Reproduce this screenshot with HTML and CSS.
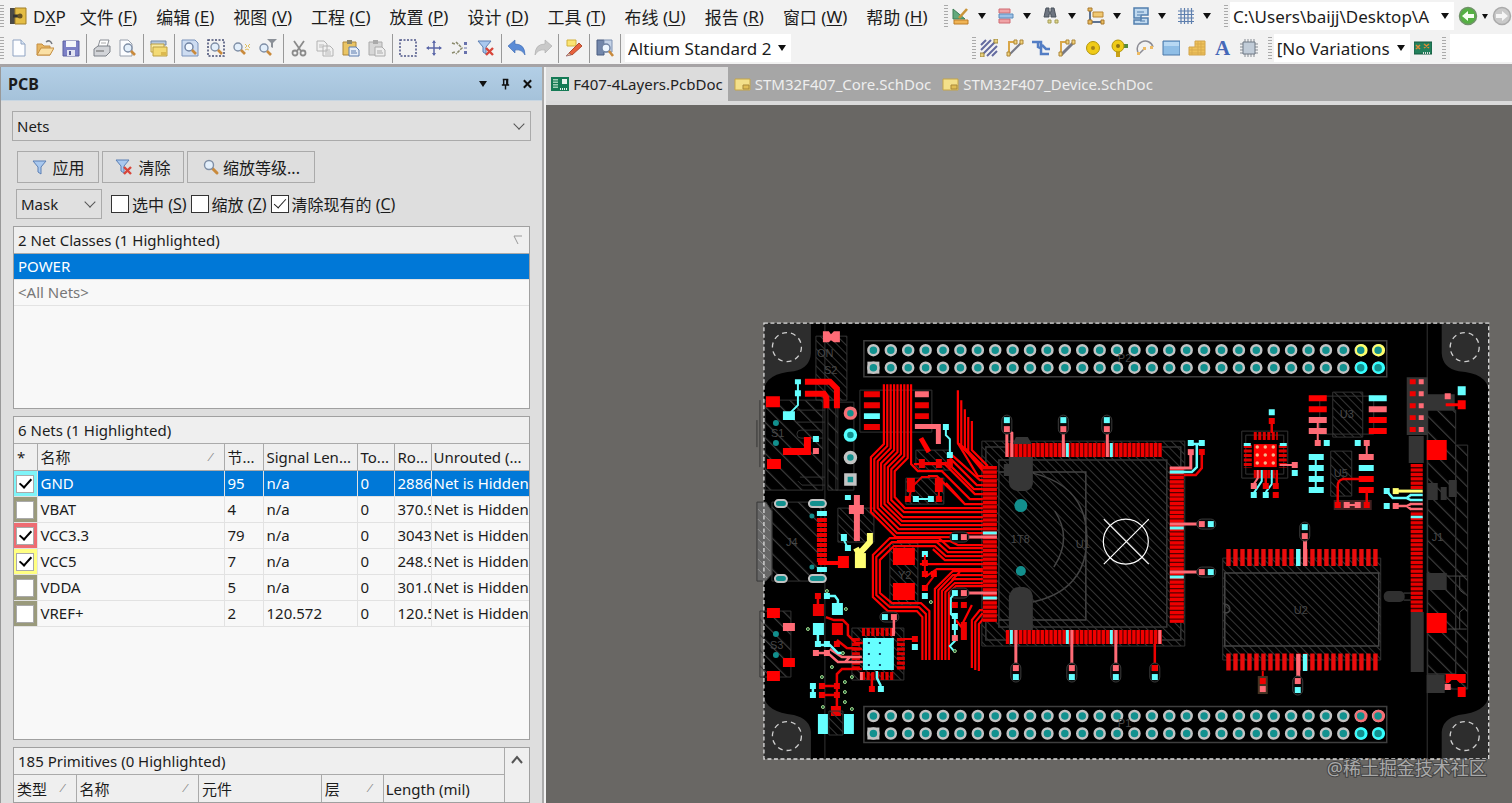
FILE: index.html
```html
<!DOCTYPE html>
<html lang="zh-CN">
<head>
<meta charset="utf-8">
<title>F407-4Layers.PcbDoc</title>
<link rel="stylesheet" href="styles.css">
</head>
<body>
<svg class="defs" aria-hidden="true">
  <defs>
    <symbol id="i-lens" viewBox="0 0 18 18"><path d="M10 10l5 5" stroke="#c98a3c" stroke-width="3" stroke-linecap="round"/><circle cx="7" cy="7" r="4.5" fill="#e3effb" stroke="#7f8fa6" stroke-width="1.4"/></symbol>
    <symbol id="i-funnel" viewBox="0 0 18 18"><path d="M2 3h13l-5 6v7l-3-2V9z" fill="#a9c8ee" stroke="#5b7fb4"/></symbol>
    <symbol id="i-funnelx" viewBox="0 0 18 18"><path d="M1 2h13l-5 6v7l-3-2V8z" fill="#a9c8ee" stroke="#5b7fb4"/><path d="M9 9l7 7M16 9l-7 7" stroke="#d8453a" stroke-width="2.4"/></symbol>
    <symbol id="i-sheet" viewBox="0 0 18 18"><path d="M2 4h15v11H2z" fill="#f3e08a" stroke="#c5a548"/><path d="M10 10h6v4h-6z" fill="#e0bd54" stroke="#a8893a"/></symbol>
  </defs>
</svg>
<header class="bars">
  <div class="bar">
    <nav class="menu" aria-label="Menu">
      <span class="grip"></span>
      <button class="menu-item dxp"><svg class="logo" viewBox="0 0 18 18"><path d="M1 1h6v16H1z" fill="#4b4a47"/><path d="M6 1h11v16H6z" fill="#e4bd45" stroke="#a17f28"/><path d="M4 9h5" stroke="#333" stroke-width="3"/><circle cx="11" cy="9" r="2.5" fill="#685322"/></svg>D<u>X</u>P</button>
      <button class="menu-item">文件 (<u>F</u>)</button>
      <button class="menu-item">编辑 (<u>E</u>)</button>
      <button class="menu-item">视图 (<u>V</u>)</button>
      <button class="menu-item">工程 (<u>C</u>)</button>
      <button class="menu-item">放置 (<u>P</u>)</button>
      <button class="menu-item">设计 (<u>D</u>)</button>
      <button class="menu-item">工具 (<u>T</u>)</button>
      <button class="menu-item">布线 (<u>U</u>)</button>
      <button class="menu-item">报告 (<u>R</u>)</button>
      <button class="menu-item">窗口 (<u>W</u>)</button>
      <button class="menu-item">帮助 (<u>H</u>)</button>
    </nav>
    <div class="utilities">
      <span class="grip"></span>
      <button class="tool drop" aria-label="Utility tools"><svg viewBox="0 0 18 18"><path d="M1 2v10h12z" fill="#62a97d" stroke="#3c7e55"/><path d="M7 11l8-9" stroke="#c99438" stroke-width="2.6"/><path d="M2 13h14v4H2z" fill="#f0b455" stroke="#bd7d27"/></svg><i class="caret"></i></button>
      <button class="tool drop" aria-label="Align"><svg viewBox="0 0 18 18"><path d="M2 2h11v4H2zM2 12h11v4H2z" fill="#f0a3a6" stroke="#cf6b72"/><path d="M2 7h14v4H2z" fill="#9cc0e6" stroke="#5d8cbb"/></svg><i class="caret"></i></button>
      <button class="tool drop" aria-label="Find"><svg viewBox="0 0 18 18"><path d="M4 1h3v4h2V1h3l2 9H9V7H7v3H2z" fill="#6d7480" stroke="#4b525c"/><path d="M6 13h3v3H6zM13 13h3v3h-3z" fill="#dfd68f" stroke="#a59d55"/></svg><i class="caret"></i></button>
      <button class="tool drop" aria-label="Dimension"><svg viewBox="0 0 18 18"><path d="M3 2v13h13" fill="none" stroke="#5d7392" stroke-width="2"/><path d="M6 5h10v5H6z" fill="#f0c872" stroke="#ba8632"/><path d="M1 1h4v3H1zM1 13h4v4H1zM14 13h3v4h-3z" fill="#e8bb60" stroke="#a9792b"/></svg><i class="caret"></i></button>
      <button class="tool drop" aria-label="Room"><svg viewBox="0 0 18 18"><path d="M2 1h14v7H9v3H2zM2 13h7v-2h7v6H2z" fill="#c0d9ef" stroke="#527fae" stroke-width="1.5"/><path d="M5 5h7M5 8h3M8 14h5" stroke="#527fae"/></svg><i class="caret"></i></button>
      <button class="tool drop" aria-label="Grid"><svg viewBox="0 0 18 18"><path d="M1 4h16M1 7.500h16M1 11h16M1 14.500h16M4 1v16M7.500 1v16M11 1v16M14.500 1v16" stroke="#5e7fae" stroke-width="1.2"/></svg><i class="caret"></i></button>
      <span class="grip"></span>
      <span class="field path-field"><input aria-label="Path" value="C:\Users\baijj\Desktop\A"><i class="caret"></i></span>
      <button class="nav-button" aria-label="Back"><svg viewBox="0 0 20 20"><circle cx="10" cy="10" r="8.500" fill="#55b043" stroke="#71926a" stroke-width="1.5"/><path d="M4 10l6-5v3h6v4h-6v3z" fill="#f7fff2"/></svg></button>
      <i class="caret small"></i>
      <button class="nav-button" aria-label="Forward"><svg viewBox="0 0 20 20"><circle cx="10" cy="10" r="8.500" fill="#c9c9c9" stroke="#aaa" stroke-width="1.5"/><path d="M16 10l-6-5v3H4v4h6v3z" fill="#f5f5f5"/></svg></button>
    </div>
  </div>
  <div class="bar">
    <div class="standard">
      <span class="grip"></span>
      <button class="tool" aria-label="New"><svg viewBox="0 0 18 18"><path d="M3 1h8l4 4v12H3z" fill="#fcfdff" stroke="#8fa3c2"/><path d="M11 1v4h4" fill="#dbe7f5" stroke="#8fa3c2"/></svg></button>
      <button class="tool" aria-label="Open"><svg viewBox="0 0 18 18"><path d="M1 16V5h5l2 2h6v9z" fill="#e7b662" stroke="#c58e42"/><path d="M1 16l4-7h13l-4 7z" fill="#fae0a5" stroke="#c58e42"/><path d="M10 3q4-3 6 2" fill="none" stroke="#75797f" stroke-width="1.5"/></svg></button>
      <button class="tool" aria-label="Save"><svg viewBox="0 0 18 18"><path d="M1 2h16v15H1z" fill="#7c80c6" stroke="#5b5f9f"/><path d="M4 2h10v6H4z" fill="#f4f5fa"/><path d="M5 11h8v6H5z" fill="#e1e3f2"/><path d="M7 12h2v4H7z" fill="#555b96"/></svg></button>
      <i class="separator"></i>
      <button class="tool" aria-label="Print"><svg viewBox="0 0 18 18"><path d="M5 8l2-7h9l-2 7z" fill="#fff" stroke="#8b8f96"/><path d="M1 10l4-3h12v6l-4 4H1z" fill="#d2d4d8" stroke="#7d8188"/><path d="M3 12h8" stroke="#666"/><path d="M8 4h5" stroke="#aaa"/></svg></button>
      <button class="tool" aria-label="Print preview"><svg viewBox="0 0 18 18"><path d="M1 1h8l4 4v12H1z" fill="#fcfdff" stroke="#98a0ad"/><circle cx="9" cy="9" r="4" fill="#e3effb" stroke="#7f8fa6" stroke-width="1.400"/><path d="M12 12l4 4" stroke="#c98a3c" stroke-width="2.600"/></svg></button>
      <i class="separator"></i>
      <button class="tool" aria-label="Workspace"><svg viewBox="0 0 18 18"><path d="M1 2h15v4H1z" fill="#b6c8df" stroke="#7389a8"/><path d="M1 5h13v8H1z" fill="#f7e9a2" stroke="#bc9f45"/><path d="M3 8h14v9H3z" fill="#f3da74" stroke="#bc9f45"/><path d="M11 13h5v3h-5z" fill="#dcb94f"/></svg></button>
      <i class="separator"></i>
      <button class="tool" aria-label="Fit document"><svg viewBox="0 0 18 18"><path d="M1 1h13l3 3v13H1z" fill="#cddcf1" stroke="#7a93bb"/><circle cx="8" cy="8" r="4" fill="#f2f8ff" stroke="#6f83a3" stroke-width="1.400"/><path d="M11 11l4 4" stroke="#c98a3c" stroke-width="2.600"/></svg></button>
      <button class="tool" aria-label="Zoom area"><svg viewBox="0 0 18 18"><path d="M1 1h16v16H1z" fill="none" stroke="#444c73" stroke-width="1.500" stroke-dasharray="2 1.500"/><circle cx="8" cy="8" r="4" fill="#e3effb" stroke="#7f8fa6" stroke-width="1.400"/><path d="M11 11l4 4" stroke="#c98a3c" stroke-width="2.600"/></svg></button>
      <button class="tool" aria-label="Zoom selected"><svg viewBox="0 0 18 18"><circle cx="5" cy="8" r="4" fill="#e3effb" stroke="#7f8fa6" stroke-width="1.400"/><path d="M8 11l4 4" stroke="#c98a3c" stroke-width="2.600"/><path d="M12 5l2 2-2 2M17 5l-2 2 2 2M12 11l2-1 2 1" fill="none" stroke="#e0c060"/></svg></button>
      <button class="tool" aria-label="Zoom filtered"><svg viewBox="0 0 18 18"><path d="M8 0h10l-4 4v5l-2-1V4z" fill="#8c9198"/><circle cx="5" cy="9" r="4" fill="#e3effb" stroke="#7f8fa6" stroke-width="1.400"/><path d="M8 12l4 4" stroke="#c98a3c" stroke-width="2.600"/></svg></button>
      <i class="separator"></i>
      <button class="tool" aria-label="Cut"><svg viewBox="0 0 18 18"><path d="M4 2l7 10M14 2L7 12" stroke="#8b8b8b" stroke-width="1.800"/><circle cx="5" cy="14" r="2.500" fill="none" stroke="#8b8b8b" stroke-width="1.800"/><circle cx="13" cy="14" r="2.500" fill="none" stroke="#8b8b8b" stroke-width="1.800"/></svg></button>
      <button class="tool" aria-label="Copy"><svg viewBox="0 0 18 18"><path d="M1 2h7l3 3v7H1zM7 7h7l3 3v7H7z" fill="#f1f1f1" stroke="#b2b2b2"/><path d="M3 6h5M3 8h4M9 11h5M9 13h6M9 15h6" stroke="#bbb"/></svg></button>
      <button class="tool" aria-label="Paste"><svg viewBox="0 0 18 18"><path d="M1 3h13v13H1z" fill="#eac565" stroke="#ad8638"/><path d="M5 1h5v4H5z" fill="#8c8870"/><path d="M7 8h7l3 3v6H7z" fill="#e5edf8" stroke="#5d7cae"/><path d="M9 12h5M9 14h6" stroke="#5d7cae"/></svg></button>
      <button class="tool" aria-label="Paste special"><svg viewBox="0 0 18 18"><path d="M1 3h13v13H1z" fill="#d7d7d7" stroke="#aaa"/><path d="M5 1h5v4H5z" fill="#aaa"/><path d="M7 8h7l3 3v6H7z" fill="#eee" stroke="#aaa"/><path d="M9 12h5M9 14h6" stroke="#aaa"/></svg></button>
      <i class="separator"></i>
      <button class="tool" aria-label="Select area"><svg viewBox="0 0 18 18"><path d="M1 1h16v16H1z" fill="none" stroke="#4e5688" stroke-width="1.500" stroke-dasharray="2 1.500"/></svg></button>
      <button class="tool" aria-label="Move"><svg viewBox="0 0 18 18"><path d="M9 2v14M2 9h14" stroke="#5b67a8" stroke-width="1.500"/><path d="M9 1l2 3H7zM9 17l2-3H7zM1 9l3-2v4zM17 9l-3-2v4z" fill="#5b67a8"/></svg></button>
      <button class="tool" aria-label="Deselect"><svg viewBox="0 0 18 18"><path d="M1 4l3 1M5 3l6 6-6 6M1 14l3-1" fill="none" stroke="#8a8a6c" stroke-width="1.500" stroke-dasharray="3 1"/><path d="M13 3h3v3h-3zM13 12h3v3h-3z" fill="#6872ad"/><path d="M13 9h3" stroke="#6872ad"/></svg></button>
      <button class="tool" aria-label="Clear filter"><svg><use href="#i-funnelx"/></svg></button>
      <i class="separator"></i>
      <button class="tool" aria-label="Undo"><svg viewBox="0 0 18 18"><path d="M0 7l7-6v4q10 0 10 11-3-6-10-5v3z" fill="#5a8bd6" stroke="#3b68b0" stroke-width=".600"/></svg></button>
      <button class="tool" aria-label="Redo"><svg viewBox="0 0 18 18"><path d="M18 7l-7-6v4Q1 5 1 16q3-6 10-5v3z" fill="#c9c9c9" stroke="#aaa" stroke-width=".600"/></svg></button>
      <i class="separator"></i>
      <button class="tool" aria-label="Cross probe"><svg viewBox="0 0 18 18"><path d="M2 1h9v6H2z" fill="#fbe573" stroke="#d2b13c"/><path d="M4 14L14 4l3 3L7 16z" fill="#e8633e" stroke="#b14a2d"/><path d="M1 17l3-3 2 2z" fill="#e8c291" stroke="#a77"/></svg></button>
      <i class="separator"></i>
      <button class="tool" aria-label="Browse"><svg viewBox="0 0 18 18"><path d="M1 1h7v15H1z" fill="#7387ab" stroke="#4a5d80"/><path d="M8 1h8v12H8z" fill="#c5d3e8" stroke="#7d90b1"/><circle cx="10" cy="9" r="4" fill="#eef6ff" stroke="#6f83a3" stroke-width="1.400"/><path d="M13 12l4 5" stroke="#c98a3c" stroke-width="2.600"/></svg></button>
      <i class="separator"></i>
      <span class="field view-field"><select aria-label="View configuration"><option>Altium Standard 2</option></select><i class="caret"></i></span>
    </div>
    <div class="wiring">
      <span class="grip"></span>
      <button class="tool" aria-label="Route"><svg viewBox="0 0 18 18"><path d="M1 6l5-5M1 11L11 1M1 17L16 2M7 17l10-10M12 17l5-5" stroke="#646ba0" stroke-width="2"/><path d="M14 0h4v4h-4zM0 14h4v4H0z" fill="#e7cf7d" stroke="#9d873d"/></svg></button>
      <button class="tool" aria-label="Route pair"><svg viewBox="0 0 18 18"><path d="M3 16L16 3" stroke="#777a87" stroke-width="2"/><path d="M3 14V3h6" fill="none" stroke="#d9a749" stroke-width="2"/><path d="M14 1h3v4h-3zM1 13h3v4H1zM8 1h3v4H8z" fill="#f1d27b" stroke="#ad8638"/></svg></button>
      <button class="tool" aria-label="Route bus"><svg viewBox="0 0 18 18"><path d="M0 3h9v12h8M6 3v5l4 2M10 6l4 4h4" fill="none" stroke="#537dc4" stroke-width="2.500"/></svg></button>
      <button class="tool" aria-label="Route differential"><svg viewBox="0 0 18 18"><path d="M3 16L16 3" stroke="#777a87" stroke-width="3"/><path d="M3 15V3h8" fill="none" stroke="#d9a749" stroke-width="2"/><path d="M14 1h3v4h-3zM1 13h3v4H1zM8 1h3v4H8z" fill="#f1d27b" stroke="#ad8638"/></svg></button>
      <button class="tool" aria-label="Pad"><svg viewBox="0 0 18 18"><circle cx="9" cy="9" r="6.500" fill="#f0cb18" stroke="#b3960d"/><circle cx="9" cy="9" r="2" fill="#a68317"/></svg></button>
      <button class="tool" aria-label="Via"><svg viewBox="0 0 18 18"><path d="M11 7h7" stroke="#568d3e" stroke-width="4"/><path d="M8 11v7" stroke="#c8a11a" stroke-width="4"/><circle cx="8" cy="7" r="6" fill="#f0cb18" stroke="#b3960d"/><circle cx="8" cy="7" r="2" fill="#8f7314"/></svg></button>
      <button class="tool" aria-label="Arc"><svg viewBox="0 0 18 18"><path d="M3 15A8 8 0 1 1 17 8M3 15l5-5" fill="none" stroke="#8c8c94" stroke-width="1.500"/><path d="M1 13h3v3H1zM14 7h3v3h-3zM7 8h3v3H7z" fill="#edbb64"/></svg></button>
      <button class="tool" aria-label="Fill"><svg viewBox="0 0 18 18"><path d="M1 2h17v14H1z" fill="#8fbee6" stroke="#4c78a8"/><path d="M2 3h15v4H2z" fill="#b7d8f3"/></svg></button>
      <button class="tool" aria-label="Polygon"><svg viewBox="0 0 18 18"><path d="M1 8h6V2h10v14H1z" fill="#eec25c" stroke="#d1a34b"/><path d="M1 11h16M1 14h16M7 5h10M4 8v8M10 2v14M13 2v14M7 8h10" stroke="#d9ab4c"/></svg></button>
      <button class="tool letter" aria-label="String">A</button>
      <button class="tool" aria-label="Component"><svg viewBox="0 0 18 18"><path d="M5 0v18M8 0v18M11 0v18M14 0v18M0 5h18M0 8h18M0 11h18M0 14h18" stroke="#858b93"/><path d="M3 3h12v12H3z" fill="#c1ccd8" stroke="#6f7984"/></svg></button>
      <span class="grip late"></span>
      <span class="field variant-field"><select aria-label="Variations"><option>[No Variations</option></select><i class="caret"></i></span>
      <button class="tool" aria-label="Variant board"><svg viewBox="0 0 18 18"><path d="M0 3h18v12H0z" fill="#23805c" stroke="#17583f"/><path d="M2 6l4 4M6 6l-4 4M10 5l5 4M15 5l-5 4" stroke="#e08a35" stroke-width="1.500"/><path d="M9 14h8" stroke="#ddd" stroke-width="2" stroke-dasharray="1 1"/></svg></button>
      <span class="grip late"></span>
      <input class="blank-field" aria-label="Filter">
    </div>
  </div>
</header>
<main class="workspace">
  <aside class="panel">
    <div class="panel-title">
      <h1>PCB</h1>
      <button aria-label="Menu"><i class="caret"></i></button>
      <button aria-label="Pin"><svg viewBox="0 0 12 12"><path d="M3 1h6M4 1v6M7.500 1v6M2 7h8M6 7v5" stroke="#111" stroke-width="1.600"/><path d="M7 1h2v6H7z" fill="#111"/></svg></button>
      <button aria-label="Close"><svg viewBox="0 0 12 12"><path d="M2 2l8 8M10 2l-8 8" stroke="#111" stroke-width="2.200"/></svg></button>
    </div>
    <div class="panel-body">
      <span class="combo"><select aria-label="Object type"><option>Nets</option></select></span>
      <div class="actions">
        <button class="action"><svg><use href="#i-funnel"/></svg>应用</button>
        <button class="action wide"><svg><use href="#i-funnelx"/></svg>清除</button>
        <button class="action widest"><svg><use href="#i-lens"/></svg>缩放等级...</button>
      </div>
      <div class="options">
        <span class="combo mask"><select aria-label="Highlight mode"><option>Mask</option></select></span>
        <label><input type="checkbox">选中 (<u>S</u>)</label>
        <label><input type="checkbox">缩放 (<u>Z</u>)</label>
        <label><input type="checkbox" checked>清除现有的 (<u>C</u>)</label>
      </div>
      <section class="list classes">
        <h2>2 Net Classes (1 Highlighted)<svg class="sort" viewBox="0 0 10 10"><path d="M9 1H1l4 8" fill="none" stroke="#999"/></svg></h2>
        <ul><li class="selected">POWER</li><li class="muted">&lt;All Nets&gt;</li></ul>
      </section>
      <section class="list nets">
        <h2>6 Nets (1 Highlighted)</h2>
        <table>
          <colgroup><col class="c-mark"><col class="c-name"><col class="c-node"><col class="c-signal"><col class="c-small"><col class="c-small"><col></colgroup>
          <thead><tr><th>*</th><th>名称<i class="slash">⁄</i></th><th>节...</th><th>Signal Len...</th><th>To...</th><th>Ro...</th><th>Unrouted (...</th></tr></thead>
          <tbody>
            <tr class="selected"><td class="mark cyan"><input type="checkbox" aria-label="GND" checked></td><td>GND</td><td>95</td><td>n/a</td><td>0</td><td>2886</td><td>Net is Hidden</td></tr>
            <tr><td class="mark"><input type="checkbox" aria-label="VBAT"></td><td>VBAT</td><td>4</td><td>n/a</td><td>0</td><td>370.9</td><td>Net is Hidden</td></tr>
            <tr><td class="mark pink"><input type="checkbox" aria-label="VCC3.3" checked></td><td>VCC3.3</td><td>79</td><td>n/a</td><td>0</td><td>3043</td><td>Net is Hidden</td></tr>
            <tr><td class="mark yellow"><input type="checkbox" aria-label="VCC5" checked></td><td>VCC5</td><td>7</td><td>n/a</td><td>0</td><td>248.9</td><td>Net is Hidden</td></tr>
            <tr><td class="mark"><input type="checkbox" aria-label="VDDA"></td><td>VDDA</td><td>5</td><td>n/a</td><td>0</td><td>301.0</td><td>Net is Hidden</td></tr>
            <tr><td class="mark"><input type="checkbox" aria-label="VREF+"></td><td>VREF+</td><td>2</td><td>120.572</td><td>0</td><td>120.5</td><td>Net is Hidden</td></tr>
          </tbody>
        </table>
      </section>
      <section class="list primitives">
        <div class="primitives-main">
          <h2>185 Primitives (0 Highlighted)</h2>
          <table>
            <colgroup><col class="p-type"><col class="p-name"><col class="p-name"><col class="p-type"><col></colgroup>
            <thead><tr><th>类型<i class="slash">⁄</i></th><th>名称<i class="slash">⁄</i></th><th>元件</th><th>层<i class="slash">⁄</i></th><th>Length (mil)</th></tr></thead>
          </table>
        </div>
        <button class="scroll-up" aria-label="Scroll up"><svg viewBox="0 0 12 12"><path d="M1 9l5-6 5 6" fill="none" stroke="#555" stroke-width="2"/></svg></button>
      </section>
    </div>
  </aside>
  <section class="document">
    <div class="tabs" role="tablist">
      <button class="tab active" role="tab" aria-selected="true"><svg viewBox="0 0 18 18"><path d="M0 2h18v14H0z" fill="#157a55"/><path d="M2 4h5v9H2z" fill="#9fd0b7"/><path d="M2 6h5M2 8.500h5M2 11h5" stroke="#157a55"/><path d="M11 4h5v5h-5z" fill="#e8f1ec"/><path d="M9 14h8" stroke="#e8f1ec" stroke-width="2" stroke-dasharray="1 1"/></svg>F407-4Layers.PcbDoc</button>
      <button class="tab" role="tab"><svg><use href="#i-sheet"/></svg>STM32F407_Core.SchDoc</button>
      <button class="tab" role="tab"><svg><use href="#i-sheet"/></svg>STM32F407_Device.SchDoc</button>
    </div>
    <svg class="board" viewBox="546 105 966 698" preserveAspectRatio="xMaxYMax meet" role="img" aria-label="PCB layout">
      <defs>
        <pattern id="hatch" width="6" height="6" patternUnits="userSpaceOnUse" patternTransform="rotate(-45)"><path d="M0 0V6" stroke="#3c3c3c" stroke-width="1.800"/></pattern>
        <pattern id="wide" width="11" height="11" patternUnits="userSpaceOnUse" patternTransform="rotate(-45)"><path d="M0 0V11" stroke="#3f3f3f" stroke-width="2.400"/></pattern>
        <g id="capv"><rect x="-5" y="-5" width="10" height="19" rx="5" fill="#070707" stroke="#3c3c3c"/><path d="M-3-3h6v6h-6z" fill="#6ff"/><path d="M-3 6h6v6h-6z" fill="#ff6b76"/></g>
        <g id="capd"><rect x="-5" y="-5" width="10" height="19" rx="5" fill="#070707" stroke="#3c3c3c"/><path d="M-3-3h6v6h-6z" fill="#ff6b76"/><path d="M-3 6h6v6h-6z" fill="#6ff"/></g>
        <g id="caph"><rect x="-5" y="-5" width="19" height="10" rx="5" fill="#070707" stroke="#3c3c3c"/><path d="M-3-3h6v6h-6z" fill="#ff6b76"/><path d="M6-3h6v6H6z" fill="#6ff"/></g>
        <g id="capl"><rect x="-5" y="-5" width="19" height="10" rx="5" fill="#070707" stroke="#3c3c3c"/><path d="M-3-3h6v6h-6z" fill="#6ff"/><path d="M6-3h6v6H6z" fill="#ff6b76"/></g>
        <g id="header" fill="none"><path d="M0-9.500H523V26.500H0z" stroke="#3e3e3e" stroke-width="1.500"/><path d="M9.500 0H515M9.500 17.500H515" stroke="#c3c3c3" stroke-width="12.500" stroke-linecap="round" stroke-dasharray="0 17.410"/><path d="M3.500 11.500h12v12h-12z" fill="#c3c3c3"/></g>
        <path id="holes" d="M9.500 0H515M9.500 17.500H515" fill="none" stroke="#12918f" stroke-width="7.500" stroke-linecap="round" stroke-dasharray="0 17.410"/>
      </defs>
      <path d="M764 323h725v436H764z" fill="#000"/>
      <g fill="#2d2d2d"><path d="M764 323h47v30q-1 15-17 18-28 2-30 19zM1489 323h-47v30q1 15 17 18 28 2 30 19zM764 759h47v-27q-1-13-17-17-28-3-30-19zM1489 759h-47v-27q1-13 17-17 28-3 30-19z"/></g>
      <g fill="none" stroke="#d0d0d0" stroke-width="1.300" stroke-dasharray="5 4"><circle cx="787" cy="347" r="14.500"/><circle cx="1465" cy="347" r="14.500"/><circle cx="787" cy="736" r="14.500"/><circle cx="1465" cy="736" r="14.500"/></g>
      <path d="M825 323V759M1427.500 323V759" stroke="#333"/>

      <!-- pin headers -->
      <g transform="translate(864 350)"><use href="#header"/><path d="M497.500 0h.1M515 0h.1" stroke="#ffff6a" stroke-width="12.500" stroke-linecap="round"/><path d="M497.500 17.500h.1M515 17.500h.1" stroke="#3ff" stroke-width="12.500" stroke-linecap="round"/><use href="#holes"/></g>
      <g transform="translate(864 716)"><use href="#header"/><path d="M497.500 0h.1M515 0h.1" stroke="#f47076" stroke-width="12.500" stroke-linecap="round"/><path d="M497.500 17.500h.1M515 17.500h.1" stroke="#3ff" stroke-width="12.500" stroke-linecap="round"/><use href="#holes"/></g>

      <!-- hatched component bodies -->
      <g fill="url(#hatch)" stroke="#343434">
        <path d="M816 336h31v64h-31zM982 441h203v205H982zM890 543h28v62h-28zM1333 392h30v45h-30zM1331 451h21v45h-21zM1223 558h158v102h-158zM852 628h52v52h-52z"/>
        <path d="M860 390h72v42h-72zM1320 396h54v38h-54z" fill="none"/>
        <path d="M916 450h35v20h-35zM906 478h38v26h-38zM838 508h36v34h-36z"/>
        <path d="M1242 431h46v47h-46zM1246 435h38v39h-38z" fill="none"/>
      </g>
      <g fill="url(#wide)" stroke="#343434">
        <path d="M765 400h58v90h-58zM828 400h10v90h-10zM772 502h49v79h-49zM760 611h31v66h-31zM1428 410h28v264h-28zM1456 445h12v244h-40v-15h28z"/>
        <path d="M760 400v67M757 420v27M823 430h-22q-4 0-4 4t4 4h22M836 402h18v88h-18z" fill="none"/>
        <path d="M800 477h25M798 481l4 4h23M825 422h-28M825 410h-28" fill="none"/>
      </g>
      <path d="M986 447h195v193H986zM999 460h168v167H999z" fill="none" stroke="#363636" stroke-width="1.500"/>
      <path d="M1225 573h154v73h-154zM1225 604q5 1 5 5t-5 4" fill="none" stroke="#464646" stroke-width="1.500"/>
      <path d="M757 502h9l6 9v63l-6 7h-9z" fill="#666" stroke="#383838"/><path d="M758 509l12 12M758 519l12 12M758 529l12 12M758 539l12 12M758 549l12 12M758 559l12 12M758 569l9 9" stroke="#929292"/>

      <!-- left bus -->
      <g fill="none" stroke="#f00" stroke-width="2.200">
        <path d="M884 384V444L871 457V512L896 537H985"/>
        <path d="M887.400 384V446L874.400 459V510L897 533H985"/>
        <path d="M890.800 384V448L877.800 461V508L899 529H985"/>
        <path d="M894.200 384V450L881.200 463V506L901 525H985"/>
        <path d="M897.600 384V452L884.600 465V504L902 521H985"/>
        <path d="M901 384V454L888 467V502L903 517H985"/>
        <path d="M904.400 384V456L891.400 469V500L904 512H985"/>
        <path d="M907.800 384V458L894.800 471V497L905 508H985"/>
        <path d="M911.200 384V464L918 471H942L970 499H985"/>
        <path d="M914 464H945L975 494H985M928 476H937L965 504H985M948 463L974 489H990M950 458L977 485H990M946 483L964 503M950 453L980 480H990"/>
        <path d="M958 390V443L983 468H990M961.400 400V445M965 409V448L981 464M968.400 417V452M972 421V450L988 466M961.400 445L984 472H990M968.400 452L984 467"/>
        <path d="M958 443L978 476H990"/>
        <path d="M985 548H950L939 538H890L873 555V597L888 611H917L922.500 617V660"/>
        <path d="M985 552H948L937 542H892L876.400 557V595L890 607H919L926 614V660"/>
        <path d="M985 556H946L935 546H894L880 560V593L892 603H921L929.500 611V660"/>
        <path d="M985 560H945L933 549M985 564H920M985 569H937L925 577"/>
        <path d="M935 660V589L953 571H985M938.500 660V590L953 575H985M942 660V591L954 579H985M945.500 660V592L955 583H985M949 660V593L956 586H985"/>
        <path d="M972 668V620L980 610H985M975.400 670V622L982 614H985M979 671V624L984 618H985"/>
        <path d="M897 541H950L958 545H985M952 580L960 572M956 620L964 630V640M972 605L963 623"/>
      </g>

      <!-- U1 pins -->
      <g fill="none"><path d="M1006 450h156M1006 637h156" stroke="#500" stroke-width="14"/><path d="M990 466v156M1177 467v156" stroke="#500" stroke-width="14"/>
        <path d="M1006 450h156M1006 637h156M990 466v156M1177 467v156" stroke="#f00000" stroke-width="14" stroke-dasharray="3.200 1.160"/>
        <path d="M1067.500 443v14M1111.500 443v14M1011.500 630v14M1067.500 630v14M1111.500 630v14M983 533h14M983 598h14M1170 472h14M1170 528h14M1170 577h14" stroke="#6ff" stroke-width="3"/>
        <path d="M1007 430v27M1008 430l4 3v24M1063.500 430v27M1107.500 430v27M1016 630v34M1072 630v34M1116 630v34M1160 630v14M997 537h-30M997 593h-30M1170 524h30M1170 572h30M1170 468h21v-14" stroke="#ff6b76" stroke-width="3"/>
        <path d="M1170 472h22l5-5v-23h-6h11" stroke="#6ff" stroke-width="2.500"/><path d="M1184 475h12l6-7v-16M1155 644v22" stroke="#e00" stroke-width="2.500"/></g>
      <g fill="none" stroke="#444" stroke-width="1.500"><path d="M999 472h87v148h-87M1033 473q54 13 54 65t-54 64M1055 511q18 27-1 56"/></g>
      <path d="M1013 444l3-7h12l4 7zM1009 457h24v27q-2 7-8 7h-8q-7-1-8-8zM1004 464h8v12h-8zM1009 630v-34q3-9 10-9h5q8 1 9 9v34z" fill="#363636"/>
      <g fill="#128f8d"><circle cx="1021" cy="505.500" r="6.500"/><circle cx="1021" cy="571" r="5"/><circle cx="776" cy="423" r="3"/><circle cx="776" cy="443" r="3"/><circle cx="812" cy="516" r="2.500"/><circle cx="812" cy="567" r="2.500"/><circle cx="776" cy="634" r="3"/><circle cx="776" cy="655" r="3"/></g>
      <use href="#capv" x="1007" y="420"/><use href="#capv" x="1063.500" y="420"/><use href="#capv" x="1107" y="420"/>
      <use href="#capd" x="1016" y="668"/><use href="#capd" x="1072" y="668"/><use href="#capd" x="1116" y="668"/><use href="#capd" x="1155" y="668"/>
      <use href="#caph" x="1202" y="524"/><use href="#caph" x="1202" y="572"/><use href="#capl" x="955" y="537"/><use href="#capl" x="955" y="593"/><use href="#capl" x="885" y="617"/>
      <path d="M1188 440h6v6h-6zM1199 440h6v6h-6z" fill="#6ff"/><path d="M1188 449h6v6h-6z" fill="#ff6b76"/><path d="M1199 449h6v6h-6zM1152 665h6v6h-6z" fill="#e00"/>
      <g fill="none" stroke="#fff" stroke-width="1.200"><circle cx="1126" cy="541.500" r="22.500"/><path d="M1104 519l45 45M1149 519l-45 45"/></g>

      <!-- S1, S2 -->
      <path d="M823 331h6l2 3 3-3h6v11h-6l-3-2-2 2h-6z" fill="#ff6b76"/>
      <path d="M805 381.500h25l7 7V408M805 393.500h19l2.500 4V408" fill="none" stroke="#f00" stroke-width="6"/>
      <path d="M766 396h14v11h-14zM767 459h14v10h-14zM783 448h21v-11h7v18h-28zM767 608h13v10h-13zM767 671h13v10h-13zM783 658h12v9h-12z" fill="#f00"/>
      <path d="M798 381v24l-8 8" fill="none" stroke="#6ff" stroke-width="2"/>
      <path d="M795 379h6v5h-6zM795 390h6v6h-6zM783 411h12v9h-12zM813 436h6v6h-6z" fill="#6ff"/><path d="M813 448h6v6h-6zM783 623h12v8h-12z" fill="#ff6b76"/>
      <g stroke-width="3.500" fill="#12918f"><circle cx="850.500" cy="413" r="5" stroke="#f47076"/><circle cx="850.500" cy="435" r="5" stroke="#5ff"/><circle cx="850.500" cy="457.500" r="5" stroke="#c3c3c3"/><path d="M846 475h9v9h-9z" stroke="#c3c3c3"/></g>
      <g fill="#12918f" stroke="#c3c3c3" stroke-width="2"><rect x="775" y="500" width="12" height="7" rx="3.500"/><rect x="809" y="500" width="17" height="7" rx="3.500"/><rect x="775" y="575" width="12" height="7" rx="3.500"/><rect x="809" y="575" width="17" height="7" rx="3.500"/></g>
      <path d="M822 518v45" stroke="#e00" stroke-width="10" stroke-dasharray="4 1"/><path d="M817 511h10v5h-10zM817 567h10v5h-10z" fill="#6ff"/>

      <!-- upper left parts -->
      <path d="M864 391h16v6h-16zM864 402h16v6h-16zM864 424h16v6h-16zM915 402h14v6h-14zM915 413h14v6h-14zM919 459h6v9h-6zM936 459h6v9h-6zM947 459h6v9h-6zM907 478h8v14h-8zM935 478h8v14h-8zM905 496h6v6h-6zM936 496h6v6h-6z" fill="#e00"/>
      <path d="M864 413h16v6h-16zM943 424h6v6h-6zM947 452h6v6h-6zM913 496h6v6h-6zM928 496h6v6h-6zM845 495h6v5h-6zM841 534h6v7h-6zM845 545h6v6h-6z" fill="#6ff"/>
      <path d="M946 427v8l4 4v15M916 499h14M844 540l4 8" fill="none" stroke="#6ff" stroke-width="2"/>
      <path d="M915 391h14v6h-14zM915 424h26v20h-5v-15h-21zM854 495h6v10h4v9h-4v27h-6v-27h-5v-9h5z" fill="#ff6b76"/>
      <path d="M921 438l8 14" stroke="#f00" stroke-width="5"/><path d="M922 463h28M911 491l-2 8M939 488v11M914 485l8-8h8" fill="none" stroke="#e00" stroke-width="2"/>
      <path d="M855 553h11v15h-11z" fill="#ffff72"/><path d="M861 557l-5-9M860 553l10-11v-9" fill="none" stroke="#ffff72" stroke-width="6"/>
      <path d="M838 556h11v12h-11zM818 561h22v4h-22zM893 548h22v17h-22zM893 583h22v17h-22zM922 560h6v6h-6zM922 571h6v6h-6zM931 571h6v6h-6zM922 585h6v6h-6z" fill="#f00"/>
      <path d="M922 551h6v6h-6zM922 593h6v6h-6z" fill="#6ff"/><path d="M925 555v20M925 588l9-12" stroke="#e00" stroke-width="2"/>
      <path d="M955 593l-4 5v16l4 4v23l-5 5 5 6" fill="none" stroke="#6ff" stroke-width="2"/><path d="M952 613h6v6h-6zM952 624h6v6h-6z" fill="#6ff"/><path d="M952 602h6v6h-6zM961 602h6v6h-6zM961 622h6v18h-6z" fill="#e00"/><path d="M952 635h6v6h-6z" fill="#ff6b76"/>

      <!-- lower left parts -->
      <g fill="none" stroke-width="8" stroke-dasharray="3.200 1.500"><path d="M862 632h33M862 676h33M856 638v33M901 638v33" stroke="#d00"/></g>
      <path d="M863 638h31v32h-31z" fill="#6ff"/><path d="M868 643h20M868 654h20M868 665h20" stroke="#146" stroke-width="2" stroke-dasharray="2 9"/>
      <path d="M818 596v10M826 617l8 3h9l5 5v10l8 8h7M837 640l10 8 15 1M862 669h-20l-5 5v36M822 686h15M822 695h15M872 673v14" fill="none" stroke="#e00" stroke-width="2.500"/>
      <path d="M816 653h12l10 9h25M830 649l12 8h20M845 662l5-5h10M894 619v15" fill="none" stroke="#ff6b76" stroke-width="2.500"/>
      <path d="M827 596h8l3 4v6M818 635v10h12l8 8h6M813 686v9M877 671v7l4 8" fill="none" stroke="#6ff" stroke-width="2.500"/>
      <path d="M815 593h6v6h-6zM813 604h11v12h-11zM832 623h11v12h-11zM834 641h6v6h-6zM819 683h6v6h-6zM819 692h6v6h-6zM834 683h6v6h-6zM834 692h6v6h-6zM831 706h10v10h-10zM912 636h6v6h-6zM904 638h8v2h-8zM869 686h6v6h-6z" fill="#e00"/>
      <path d="M824 593h6v6h-6zM832 603h11v12h-11zM813 623h11v12h-11zM815 641h6v6h-6zM824 641h6v6h-6zM810 683h6v6h-6zM810 692h6v6h-6zM818 714h10v20h-10zM844 714h10v20h-10zM912 644h6v6h-6zM878 686h6v6h-6z" fill="#6ff"/>
      <path d="M813 650h6v6h-6zM824 650h6v6h-6zM860 672h3v8h-3zM892 628h3v8h-3z" fill="#ff6b76"/>
      <path d="M829 711h14v24h-14z" fill="url(#hatch)" stroke="#333"/>
      <g fill="#153" stroke="#a5d68c"><circle cx="822" cy="677" r="1.500"/><circle cx="852" cy="677" r="1.500"/><circle cx="845" cy="682" r="1.500"/><circle cx="845" cy="692" r="1.500"/><circle cx="845" cy="702" r="1.500"/><circle cx="852" cy="709" r="1.500"/><circle cx="823" cy="707" r="1.500"/><circle cx="832" cy="667" r="1.500"/><circle cx="846" cy="609" r="1.500"/><circle cx="808" cy="629" r="1.500"/><circle cx="827" cy="591" r="1.500"/><circle cx="843" cy="653" r="1.500"/><circle cx="955" cy="651" r="1.500"/><circle cx="931" cy="602" r="1.500"/></g>

      <!-- QFN -->
      <path d="M1254 436h24M1254 474h24M1248 445v23M1283 445v23" fill="none" stroke="#d00" stroke-width="8" stroke-dasharray="3 1.500"/>
      <path d="M1254 444h23v23h-23z" fill="#f00"/><path d="M1257.500 447h17M1257.500 455h17M1257.500 463h17" stroke="#f3b28b" stroke-width="3.500" stroke-linecap="round" stroke-dasharray="0 8"/>
      <path d="M1244 443h7v3h-7zM1280 443h7v3h-7zM1269 409h6v6h-6zM1292 470h6v6h-6zM1251 492h6v6h-6zM1263 492h6v6h-6z" fill="#6ff"/>
      <path d="M1262 470v11l-4 6-4 6M1272 470v14l-6 8" fill="none" stroke="#6ff" stroke-width="2"/><path d="M1258 470v8l-4 6M1280 465h14" fill="none" stroke="#ff6b76" stroke-width="2"/><path d="M1272 421v12M1266 470v14M1277 470v14" stroke="#e00" stroke-width="2.500"/>
      <path d="M1251 483h6v6h-6zM1292 462h6v6h-6z" fill="#ff6b76"/><path d="M1269 418h6v6h-6zM1263 483h6v6h-6zM1273 483h6v6h-6zM1273 492h6v6h-6z" fill="#e00"/>

      <!-- U3, U5 -->
      <path d="M1309 395h18v6h-18zM1309 406h18v6h-18zM1369 417h18v6h-18zM1369 428h18v6h-18zM1359 476h15v6h-15zM1359 487h15v6h-15z" fill="#f00"/>
      <path d="M1309 417h18v6h-18zM1309 428h18v6h-18zM1369 406h18v6h-18zM1359 454h15v6h-15zM1315 440h6v6h-6zM1364 440h6v6h-6zM1317 420h2v22h-2zM1366 443h2v13h-2z" fill="#ff6b76"/>
      <path d="M1369 395h18v6h-18zM1309 454h15v6h-15zM1309 465h15v6h-15zM1309 476h15v6h-15zM1309 487h15v6h-15zM1315 457h2v33h-2zM1359 465h15v6h-15zM1324 440h6v6h-6zM1355 440h6v6h-6z" fill="#6ff"/>
      <path d="M1334 500h38v10h-38z" fill="#402020"/><path d="M1360 479h-17q-5 1-5 7v19M1367 490v15" fill="none" stroke="#e00" stroke-width="2.500"/><path d="M1335 502h6v6h-6zM1364 502h6v6h-6z" fill="#e00"/><path d="M1344 502h6v6h-6zM1355 502h6v6h-6zM1350 504h6v2h-6z" fill="#ff6b76"/>

      <!-- J1 -->
      <path d="M1407 377h21v58h-21zM1409 436h15v27h-15zM1428 394h27v16h-27zM1411 612h13v60h-13zM1427 573h20v17h-20zM1427 675h18v18h-18zM1428 483h10v17h-10zM1441 487h6v13h-6zM1449 480h8v17h-8z" fill="#343434"/>
      <path d="M1413 379v54" stroke="#e00" stroke-width="6" stroke-dasharray="5 7"/><path d="M1421.500 379v54" stroke="#ff6b76" stroke-width="5" stroke-dasharray="5 7"/>
      <path d="M1417 464v148" stroke="#400" stroke-width="12"/><path d="M1417 464v148" stroke="#e80000" stroke-width="12" stroke-dasharray="3 1.400"/>
      <path d="M1427 440h20v20h-20zM1427 613h20v20h-20zM1446 403h14v3h-14zM1458 400h8v9h-8zM1446 674h20v9h-6l-3-3h-5l-3 3h-3zM1458 687h8v10h-8z" fill="#f00"/>
      <path d="M1411 489h12v22h-12z" fill="#000"/>
      <path d="M1396 491h27" stroke="#ffff72" stroke-width="3"/><path d="M1387 491l6 7h14l4-3h12M1407 498l4 2h12M1411 517h12" fill="none" stroke="#6ff" stroke-width="2.500"/><path d="M1396 506h11l4-2h12M1407 506l4 3h12" fill="none" stroke="#ff6b76" stroke-width="2.500"/>
      <path d="M1384 488h6v6h-6zM1384 503h6v6h-6zM1458 386h8v9h-8z" fill="#6ff"/><path d="M1393 488h6v6h-6z" fill="#ffff72"/><path d="M1393 503h6v6h-6zM1445 393h6v6h-6zM1445 684h6v6h-6z" fill="#ff6b76"/>
      <rect x="1384" y="591" width="21" height="11" rx="5" fill="#303030"/><path d="M1404 593h7M1404 600h7M1448 576h19M1460 576v14l5 4M1465 608l-5 4v17M1448 629h19" fill="none" stroke="#4a4a4a"/>

      <!-- U2 pins -->
      <path d="M1226.500 557.500h152M1226.500 662h152" stroke="#e80c0c" stroke-width="17" stroke-dasharray="4.400 2.600"/>
      <path d="M1298.500 549v17M1305.300 654v17" stroke="#6ff" stroke-width="4.400"/><path d="M1305.300 533v33M1298.500 654v27" stroke="#ff6b76" stroke-width="4"/><path d="M1263 671v11" stroke="#e00" stroke-width="2"/>
      <use href="#capv" x="1305" y="527"/><use href="#capd" x="1298" y="681"/><path d="M1258 676h10v18h-10z" fill="#432"/><path d="M1260 678h6v6h-6z" fill="#e00"/><path d="M1260 686h6v6h-6z" fill="#ff6b76"/>

      <g class="designators"><text x="817" y="357">ON</text><text x="824" y="374">S2</text><text x="771" y="437">S1</text><text x="786" y="546">J4</text><text x="770" y="649">S3</text><text x="898" y="579">Y2</text><text x="1011" y="543">1T8</text><text x="1076" y="548">U1</text><text x="1340" y="418">U3</text><text x="1334" y="477">U5</text><text x="1294" y="614">U2</text><text x="1432" y="541">J1</text><text x="1118" y="362">P2</text><text x="1118" y="727">P1</text></g>
      <path d="M764 323h725v436H764z" fill="none" stroke="#ddd" stroke-width="1.300" stroke-dasharray="4 2.500"/>
      <text class="watermark" x="1327" y="775">@稀土掘金技术社区</text>
    </svg>
  </section>
</main>
</body>
</html>
```
FILE: styles.css
```css
* { box-sizing: border-box; }
body {
  margin: 0;
  height: 100vh;
  display: flex;
  flex-direction: column;
  overflow: hidden;
  background: #f2f2f2;
  color: #1c1c1c;
  font: 15px "Noto Sans", "Noto Sans CJK SC", sans-serif;
}
button, input, select { font: inherit; color: inherit; margin: 0; }
button { background: none; border: 0; padding: 0; }
.defs { position: absolute; width: 0; height: 0; }

/* Menu and tool bars */
.bars { border-bottom: 3px solid #a6a3a5; flex: none; }
.bar { display: flex; height: 32px; align-items: center; white-space: nowrap; font-size: 17px; }
.menu, .utilities, .standard, .wiring { display: flex; align-items: center; height: 100%; }
.menu { gap: 19px; flex: none; width: 944px; }
.menu .grip { margin-right: -14px; }
.menu-item { display: flex; align-items: center; white-space: pre; }
.dxp { margin-right: -5px; }
u { text-decoration-thickness: 1px; text-underline-offset: 2px; }
.logo { width: 18px; height: 18px; margin-right: 6px; }
.grip { flex: none; width: 4px; height: 22px; background: repeating-linear-gradient(#aaa 0 1px, #f2f2f2 1px 3px); }
.late { margin: 0 2px 0 6px; }
.standard .grip { margin-right: 2px; }
.utilities { flex: 1; min-width: 0; }
.tool { flex: none; width: 26px; height: 28px; display: flex; align-items: center; justify-content: center; }
.tool svg { width: 18px; height: 18px; flex: none; }
.drop { width: 45px; justify-content: flex-start; padding-left: 4px; gap: 8px; }
.drop + .grip { margin: 0 1px 0 6px; }
.letter { font: bold 21px "Liberation Serif", serif; color: #4668b8; }
.caret { flex: none; width: 0; height: 0; border: 4px solid transparent; border-top: 6px solid #111; border-bottom: 0; }
.small { border-width: 5px 3px 0; margin: 0 4px; }
.separator { flex: none; width: 1px; height: 29px; margin: 0 2px; background: #999; }
.field { display: flex; align-items: center; height: 28px; background: #fff; }
.field .caret { margin: 0 5px; }
.field select, .field input { appearance: none; border: 0; outline: 0; background: none; padding: 0 0 0 3px; flex: 1; width: 0; height: 100%; }
.path-field { flex: 1; margin-left: 1px; min-width: 0; }
.nav-button { width: 20px; height: 20px; margin-left: 4px; }
.nav-button svg { display: block; width: 20px; height: 20px; }
.small + .nav-button { margin-left: 0; }
.view-field { width: 166px; margin-left: 2px; }
.wiring { flex: 0 0 36%; margin-left: auto; padding-left: 4px; }
.variant-field { width: 136px; }
.blank-field { flex: 1; width: 0; height: 28px; border: 0; margin-left: 2px; background: #fff; }

.workspace { flex: 1; display: flex; min-height: 0; }

/* PCB panel */
.panel { flex: 0 0 36%; display: flex; flex-direction: column; min-height: 0; background: #dedede; border-left: 1px solid #999; border-right: 2px solid #aaa; }
.panel-title { display: flex; align-items: center; height: 34px; flex: none; padding: 0 4px 0 7px; background: linear-gradient(#b3cfe6, #a5c2da); border-bottom: 1px solid #c8d6e2; }
.panel-title h1 { flex: 1; margin: 0; font-size: 16px; }
.panel-title button { width: 22px; height: 20px; display: grid; place-items: center; }
.panel-title svg { width: 11px; height: 12px; }
.panel-body { flex: 1; min-height: 0; display: flex; flex-direction: column; padding: 10px 11px 0 11px; }
.combo { position: relative; display: block; height: 30px; }
.combo select { appearance: none; width: 100%; height: 100%; border: 1px solid #aaa; background: #e0e0e0; border-radius: 0; padding: 0 4px; }
.combo::after { content: ""; position: absolute; right: 8px; top: 9px; width: 7px; height: 7px; border: solid #555; border-width: 0 1px 1px 0; transform: rotate(45deg); pointer-events: none; }
.actions { display: flex; gap: 3px; margin: 10px 5px 0; }
.action { display: flex; align-items: center; justify-content: center; gap: 3px; width: 82px; height: 32px; border: 1px solid #aaa; font-size: 16px; }
.action svg { width: 18px; height: 18px; }
.wide { gap: 5px; }
.widest { width: 128px; }
.options { display: flex; align-items: center; gap: 4px; margin: 6px 4px 7px; white-space: nowrap; }
.options label { display: flex; align-items: center; white-space: pre; font-size: 16px; }
.mask { width: 86px; margin-right: 5px; }
input[type="checkbox"] { appearance: none; flex: none; width: 18px; height: 18px; margin: 0; background: #fff; border: 1px solid #333; display: grid; place-items: center; }
input[type="checkbox"]:checked::after { content: ""; width: 5px; height: 11px; border: solid #222; border-width: 0 1px 1px 0; transform: translateY(-2px) rotate(42deg); }
.options input[type="checkbox"] { margin-right: 3px; }

.list { display: flex; flex-direction: column; min-height: 0; overflow: hidden; background: #f8f8f8; border: 1px solid #a0a0a0; margin: 0 1px 7px; }
.classes { flex: 182 1 0; }
.nets { flex: 325 1 0; }
.primitives { flex: 54 1 0; flex-direction: row; margin-bottom: 0; }
.list h2 { flex: none; display: flex; align-items: center; justify-content: space-between; height: 27px; margin: 0; padding: 0 6px 0 4px; background: #efefef; border-bottom: 1px solid #aaa; font-size: 15px; font-weight: normal; }
.sort { width: 10px; height: 10px; }
.list ul { margin: 0; padding: 0; list-style: none; }
.list li { height: 26px; line-height: 25px; padding: 0 4px; border-bottom: 1px solid #e3e3e3; }
.selected { background: #0078d7; color: #fff; }
.muted { color: #777; }
table { width: 100%; table-layout: fixed; border-collapse: collapse; }
th, td { height: 26px; padding: 0 0 0 3px; text-align: left; font-weight: normal; white-space: nowrap; overflow: hidden; border: 1px solid #e2e2e2; border-top: 0; }
td { padding-bottom: 1px; }
th { position: relative; height: 27px; background: #efefef; border-color: #aaa; }
tr > :first-child { border-left: 0; }
tr > :last-child { border-right: 0; padding-left: 2px; }
.c-mark { width: 23px; }
.c-name { width: 187px; }
.c-node { width: 39px; }
.c-signal { width: 94px; }
.c-small { width: 37px; }
.slash { position: absolute; right: 12px; top: 5px; color: #888; font-size: 11px; }
.mark { padding: 0 0 0 2px; background: #9a9a7c; }
.cyan { background: #7ff4f8; }
.pink { background: #ee6c72; }
.yellow { background: #ffff82; }
.mark input[type="checkbox"] { border-color: #aaa; }
.mark input[type="checkbox"]:checked::after { border-color: #000; border-width: 0 2px 2px 0; height: 10px; }
.primitives-main { flex: 1; min-width: 0; }
.p-type { width: 62px; }
.p-name { width: 25%; }
.scroll-up { flex: none; width: 25px; padding-top: 5px; border-left: 1px solid #aaa; background: #efefef; display: flex; justify-content: center; }
.scroll-up svg { width: 12px; height: 14px; }

/* Document area */
.document { flex: 1; min-width: 0; display: flex; flex-direction: column; margin-left: 2px; background: #696764; }
.tabs { display: flex; flex: none; height: 38px; background: #a6a6a6; border-bottom: 4px solid #dadada; }
.tab { display: flex; align-items: center; gap: 4px; padding: 0 5px; color: #eee; white-space: nowrap; }
.tab svg { width: 18px; height: 18px; }
.active { background: #dcdcdc; color: #222; }
.board { display: block; flex: 1; min-height: 0; width: 100%; }
.designators { font: 11px "Liberation Sans", sans-serif; fill: #484848; }
.watermark { font: 18px "Noto Sans", "Noto Sans CJK SC", sans-serif; fill: #a9a9a9; stroke: #444; stroke-width: 2px; paint-order: stroke; }
```
